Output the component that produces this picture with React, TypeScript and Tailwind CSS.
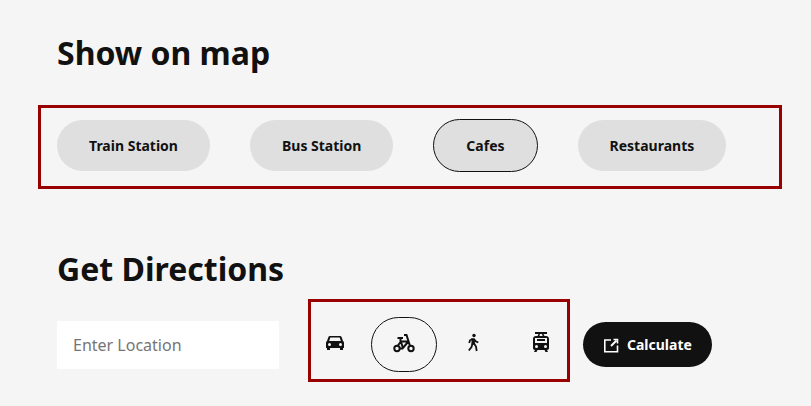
import { useState } from "react";

function CarIcon() {
  return (
    <svg viewBox="0 0 24 24" className="size-6" fill="currentColor" aria-hidden="true">
      <path
        fillRule="evenodd"
        d="M7 5h10c.8 0 1.400.4 1.700 1.200L20 10c.6.3 1 .9 1 1.600V17h-1v2h-3v-2H7v2H4v-2H3v-5.400C3 10.900 3.400 10.300 4 10l1.300-3.800C5.600 5.400 6.200 5 7 5zM7.300 6.500 6.200 10h11.600l-1.100-3.500zM6.500 12a1.500 1.500 0 1 0 0 3 1.500 1.500 0 0 0 0-3zM17.500 12a1.500 1.500 0 1 0 0 3 1.500 1.500 0 0 0 0-3z"
      />
    </svg>
  );
}

function BikeIcon() {
  return (
    <svg viewBox="0 0 24 24" className="size-6" fill="none" stroke="currentColor" strokeWidth="2" aria-hidden="true">
      <circle cx="5" cy="17.500" r="2.700" />
      <circle cx="19" cy="17.500" r="2.700" />
      <path d="M5.500 7H11M8.500 7v4.500M12 4h2.500l3.500 11M16 10.500H9L5.500 15M16 11l-5.500 6.500H7.500M9 11l2 6" />
    </svg>
  );
}

function WalkIcon() {
  return (
    <svg viewBox="0 0 24 24" className="size-6" fill="none" stroke="currentColor" aria-hidden="true">
      <circle cx="13" cy="4.500" r="1.700" fill="currentColor" stroke="none" />
      <path d="M10.500 7.300h3l.7 6.500h-3.700z" fill="currentColor" stroke="none" />
      <path strokeWidth="1.800" d="M11.500 8 9 9.300 8.200 12M13 8l1.700 2.300 2.600 1.200M11.500 12.500 10.500 16l-2.700 3.500M13 12.500l2 3 .7 4.500" />
    </svg>
  );
}

function TramIcon() {
  return (
    <svg viewBox="0 0 24 24" className="size-6" fill="currentColor" aria-hidden="true">
      <path
        fillRule="evenodd"
        d="M6 1h12v2h-3.500l1 2H17c1.800 0 3 1.200 3 3v9c0 1-.8 2-2 2l1 2h-2.500l-1-2h-7l-1 2H5l1-2c-1.200 0-2-1-2-2V8c0-1.800 1.200-3 3-3h1.500l1-2H6zM11 3l-.6 2h3.200L13 3zM6 7v5h12V7zM7.500 14a1.500 1.500 0 1 0 0 3 1.500 1.500 0 0 0 0-3zM16.500 14a1.500 1.500 0 1 0 0 3 1.500 1.500 0 0 0 0-3z"
      />
      <path d="M8 8h8v2H8z" />
    </svg>
  );
}

function OpenIcon() {
  return (
    <svg viewBox="0 0 16 16" className="size-4" fill="none" stroke="currentColor" strokeWidth="1.600" aria-hidden="true">
      <path d="M8 3H1.800v11.700h12.700V8.500" />
      <path strokeWidth="2" d="M8 9l5.500-5.500" />
      <path d="M10.500 2.500h4v4" />
    </svg>
  );
}

const places = ["Train Station", "Bus Station", "Cafes", "Restaurants"];

const modes = [
  { name: "Car", Icon: CarIcon },
  { name: "Bicycle", Icon: BikeIcon },
  { name: "Walk", Icon: WalkIcon },
  { name: "Tram", Icon: TramIcon },
];

export default function App() {
  const [place, setPlace] = useState("Cafes");
  const [mode, setMode] = useState("Bicycle");

  return (
    <main className="min-h-screen bg-[#f5f5f5] pt-[31px] pr-[29px] pl-[38px] font-['Noto_Sans',sans-serif] text-[#111111]">
      <section>
        <h2 className="pl-[19px] text-[32px] leading-[44px] font-bold">Show on map</h2>
        <div className="mt-[30px] flex flex-wrap items-center gap-10 border-3 border-[#990000] px-4 pt-[11px] pb-[14px]">
          {places.map((name) => (
            <button
              key={name}
              type="button"
              aria-pressed={place === name}
              onClick={() => setPlace(name)}
              className={
                "rounded-full bg-[#dfdfdf] px-8 py-4 text-sm leading-[19px] font-bold " +
                (place === name ? "border border-[#111111]" : "")
              }
            >
              {name}
            </button>
          ))}
        </div>
      </section>

      <section className="mt-[58px] pl-[19px]">
        <h2 className="text-[32px] leading-[44px] font-bold">Get Directions</h2>
        <form className="mt-[26px] flex items-center" onSubmit={(e) => e.preventDefault()}>
          <input
            type="text"
            aria-label="Enter Location"
            placeholder="Enter Location"
            className="h-12 w-[222px] bg-white px-4 text-base placeholder:text-[#757575]"
          />
          <div className="relative ml-6 flex items-center gap-1">
            {modes.map(({ name, Icon }) => (
              <button
                key={name}
                type="button"
                aria-label={name}
                aria-pressed={mode === name}
                onClick={() => setMode(name)}
                className={
                  "rounded-full px-5 pt-[13px] pb-4 " + (mode === name ? "border border-[#111111]" : "")
                }
              >
                <Icon />
              </button>
            ))}
            <div className="pointer-events-none absolute -top-[18px] right-[3px] -bottom-[10px] left-[5px] border-3 border-[#990000]" />
          </div>
          <button
            type="submit"
            className="ml-[10px] flex items-center gap-2 rounded-full bg-[#111111] px-5 py-[13px] text-sm leading-[19px] font-bold text-white"
          >
            <OpenIcon />
            Calculate
          </button>
        </form>
      </section>
    </main>
  );
}
